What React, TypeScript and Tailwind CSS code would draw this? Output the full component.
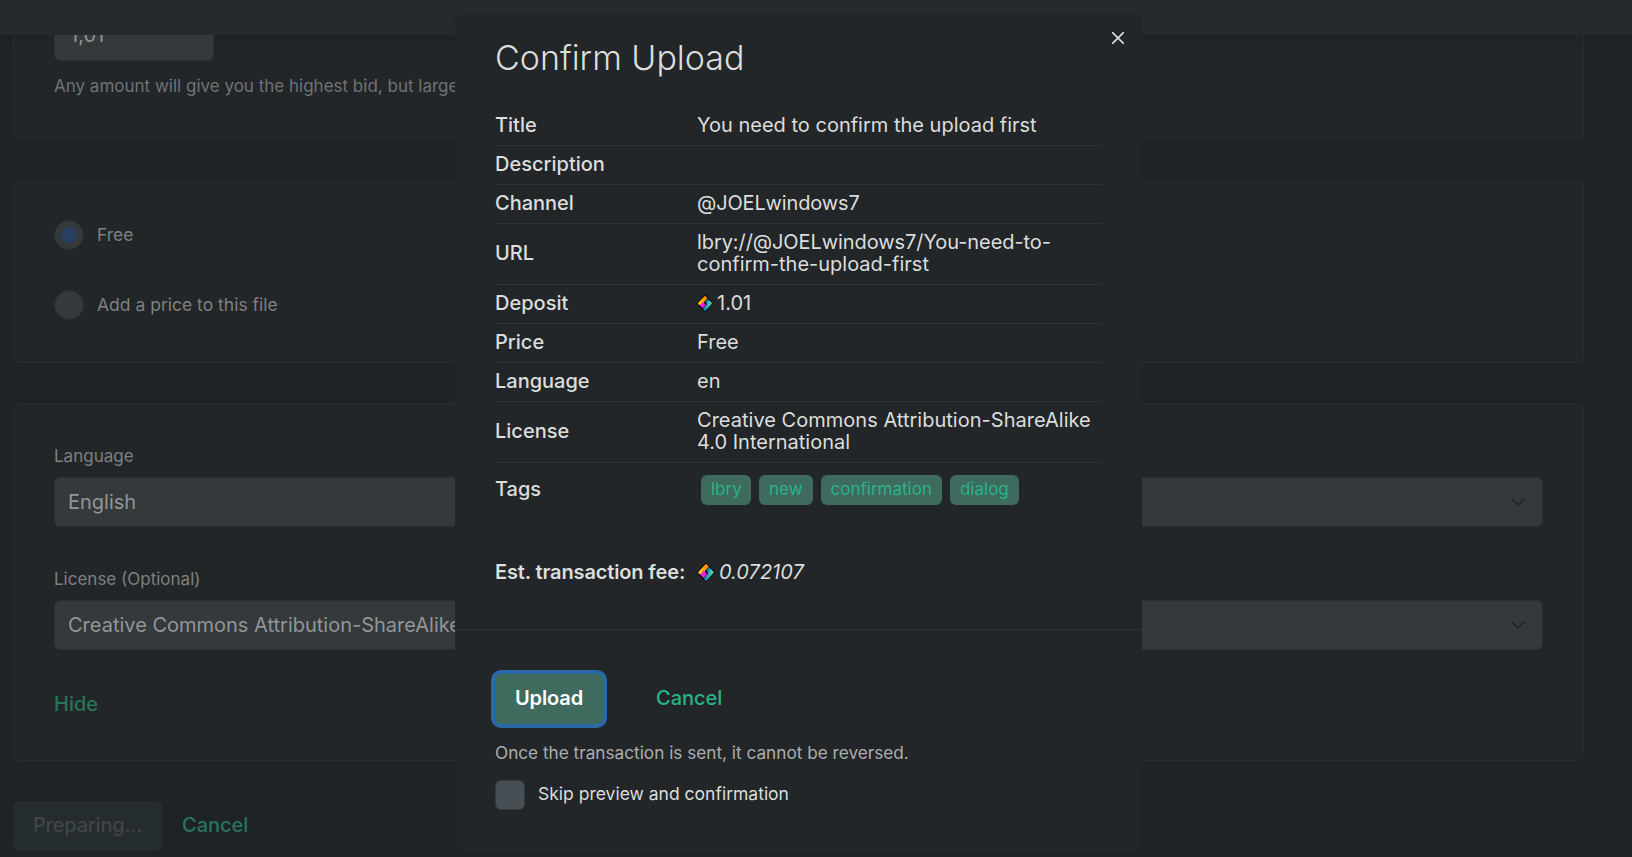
import type { ReactNode } from 'react'

function CreditIcon({ className }: { className: string }) {
  return (
    <svg viewBox="0 0 18 20" className={className} fill="none">
      <defs>
        <linearGradient id="warm" x1="1" y1="10" x2="11" y2="2" gradientUnits="userSpaceOnUse">
          <stop stopColor="#ffd60a" />
          <stop offset="1" stopColor="#ff7a00" />
        </linearGradient>
        <linearGradient id="cool" x1="8" y1="18" x2="16" y2="8" gradientUnits="userSpaceOnUse">
          <stop stopColor="#0a86b8" />
          <stop offset="1" stopColor="#5fd6a4" />
        </linearGradient>
      </defs>
      <path d="M8.2 0.2h1.6L17.9 9v2L9.8 19.8H8.2L0.1 11V9Z" fill="#000" />
      <path d="M1 9.2 8.6 1.1h.9l2.6 2.8L4.2 12.4 1 11Z" fill="url(#warm)" />
      <path d="M2.8 12.2 6.9 7.9 10.2 11.5 6.4 15.7Z" fill="#f81cf0" />
      <path d="M12.5 4.6 15.2 7.4 11.6 11.4 8.9 8.4Z" fill="#1f8fc0" />
      <path d="m14.6 6.8 2.4 2.5v1.3L9.4 18.9h-.7l-2.2-2.4Z" fill="url(#cool)" />
      <path d="M10 7.6 8.2 9.5h2.4v1L9.2 12.1" stroke="#000" strokeWidth=".9" />
    </svg>
  )
}

function Radio({ checked, label }: { checked?: boolean; label: string }) {
  return (
    <label className="flex h-[30px] items-center text-[17.5px] leading-[20px] text-[#7e8080]">
      <span className="mr-[13px] flex size-[30px] items-center justify-center rounded-full border border-[#2b2f32] bg-[#34393c]">
        {checked && <span className="size-[16px] rounded-full bg-[#27405f]" />}
      </span>
      <span className="-mt-px">{label}</span>
    </label>
  )
}

function SelectField({ label, value }: { label: string; value: string }) {
  return (
    <div>
      <div className="h-[22px] text-[17px] leading-[22px] text-[#7e8080]">{label}</div>
      <div className="mt-[10px] flex h-[50px] items-center justify-between rounded-[6px] border border-[#2b2f32] bg-[#34393c] pr-[17px] pl-[13px] text-[20px] text-[#939596]">
        <span className="-mt-px">{value}</span>
        <svg viewBox="0 0 14 8" className="h-[8px] w-[14px]" fill="none" stroke="#212529" strokeWidth="1.7" strokeLinecap="round" strokeLinejoin="round">
          <path d="m1 1 6 6 6-6" />
        </svg>
      </div>
    </div>
  )
}

function Row({ label, children }: { label: string; children?: ReactNode }) {
  return (
    <div className="flex min-h-[39px] items-center border-b border-[#2f3437] pt-[7px] pb-[9px]">
      <div className="w-[202px] shrink-0 font-medium">{label}</div>
      <div className="flex-1">{children}</div>
    </div>
  )
}

const tags = ['lbry', 'new', 'confirmation', 'dialog']

export default function App() {
  return (
    <div className="relative h-[857px] w-full overflow-hidden bg-[#1f2227] font-[Inter,sans-serif]">
      <header className="h-[35px] bg-[#26292e]" />
      <main className="flex h-[822px] flex-col gap-[40px] bg-linear-to-b from-[#1d2022] from-0% to-[#1f2227] to-[16px] pr-[48px] pl-[13px]">
        <section className="h-[105px] shrink-0 rounded-b-[6px] border border-t-0 border-[#282c2f] bg-linear-to-b from-[#1f2325] from-0% to-[#222628] to-[12px] pl-[40px]">
          <div className="flex h-[26px] items-end overflow-hidden">
            <div className="flex h-[50px] w-[160px] shrink-0 items-center rounded-[6px] border border-[#2b2f32] bg-[#34393c] pl-[15px] text-[20px] text-[#939596]">
              <span className="-mt-[2px]">1,01</span>
            </div>
          </div>
          <p className="mt-[14px] text-[17px] leading-[22px] whitespace-nowrap text-[#707374]">
            Any amount will give you the highest bid, but larger amounts help your content be trusted and discovered.
          </p>
        </section>

        <section className="flex h-[183px] shrink-0 flex-col gap-[40px] rounded-[6px] border border-[#282c2f] bg-[#222628] pt-[39px] pl-[40px]">
          <Radio checked label="Free" />
          <Radio label="Add a price to this file" />
        </section>

        <section className="h-[358px] shrink-0 rounded-[6px] border border-[#282c2f] bg-[#222628] px-[40px] pt-[41px]">
          <SelectField label="Language" value="English" />
          <div className="h-[41px]" />
          <SelectField label="License (Optional)" value="Creative Commons Attribution-ShareAlike 4.0 International" />
          <button className="mt-[43px] block text-[20px] leading-[22px] font-medium text-[#28745a]">Hide</button>
        </section>

        <div className="flex h-[50px] shrink-0 items-center text-[20px] font-medium">
          <button className="flex h-[50px] w-[149px] items-center justify-center rounded-[6px] bg-[#242c2e] tracking-[-0.2px] text-[#414547]"><span className="-mt-[2px]">Preparing...</span></button>
          <button className="-mt-[2px] ml-[20px] text-[#28745a]">Cancel</button>
        </div>
      </main>

      <div role="dialog" className="absolute top-[14px] left-[455px] flex h-[837px] w-[687px] flex-col rounded-[8px] bg-[#222628] text-[20px] leading-[22px] text-[#dcdddd]">
        <button aria-label="Close" className="absolute top-[18px] right-[18px]">
          <svg viewBox="0 0 12 12" className="size-[12px]" fill="none" stroke="#e0e0e0" strokeWidth="1.5" strokeLinecap="round">
            <path d="m.6.6 10.8 10.8M11.4.6.6 11.4" />
          </svg>
        </button>
        <h1 className="mt-[24px] ml-[40px] text-[34px] leading-[40px] font-light">Confirm Upload</h1>

        <div className="mx-[40px] mt-[29px]">
          <Row label="Title">You need to confirm the upload first</Row>
          <Row label="Description" />
          <Row label="Channel"><span className="tracking-[-0.15px]">@JOELwindows7</span></Row>
          <Row label="URL"><span className="tracking-[-0.08px]">lbry://@JOELwindows7/You-need-to-<br /></span>confirm-the-upload-first</Row>
          <Row label="Deposit">
            <span className="flex items-center"><CreditIcon className="mr-[4px] h-[17px] w-[16px]" />1.01</span>
          </Row>
          <Row label="Price">Free</Row>
          <Row label="Language">en</Row>
          <Row label="License"><span className="tracking-[0.02px]">Creative Commons Attribution-ShareAlike</span><br />4.0 International</Row>
          <div className="flex h-[54px] items-center">
            <div className="-mt-[3px] w-[206px] font-medium">Tags</div>
            <div className="flex gap-[8px]">
              {tags.map((t) => (
                <span key={t} className="h-[30px] rounded-[6px] bg-[#3f6a5e] px-[10px] text-[17px] leading-[28px] text-[#2ab289] first:w-[50px]">{t}</span>
              ))}
            </div>
          </div>
        </div>

        <div className="mt-[44px] ml-[40px] flex h-[22px] items-center">
          <div className="w-[202px] font-semibold tracking-[-0.13px]">Est. transaction fee:</div>
          <CreditIcon className="mr-[4px] h-[19px] w-[18px]" />
          <em>0.072107</em>
        </div>

        <div className="mt-[46px] border-t border-[#2f3437] px-[40px] pt-[44px]">
          <div className="flex h-[50px] items-center">
            <button className="flex h-[50px] w-[108px] items-center justify-center rounded-[6px] bg-[#3f6a5e] font-semibold tracking-[-0.1px] text-white ring-4 ring-[#2a68a6]"><span className="-mt-[2px]">Upload</span></button>
            <button className="-mt-[2px] ml-[53px] font-medium text-[#2ab289]">Cancel</button>
          </div>
          <p className="mt-[18px] text-[17.2px] leading-[22px] text-[#acadae]">Once the transaction is sent, it cannot be reversed.</p>
          <label className="mt-[16px] flex h-[30px] items-center text-[17.5px]">
            <span className="mr-[13px] size-[30px] rounded-[6px] border border-[#353a3e] bg-[#484f54]" />
            <span className="-mt-[3px]">Skip preview and confirmation</span>
          </label>
        </div>
      </div>
    </div>
  )
}
